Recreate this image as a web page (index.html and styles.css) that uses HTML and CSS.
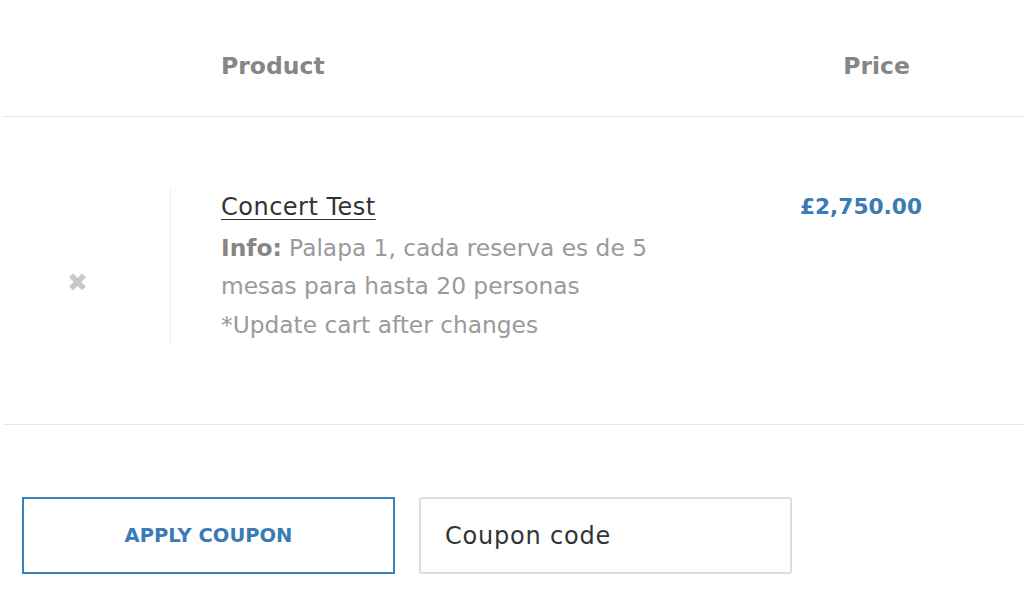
FILE: index.html
```html
<!DOCTYPE html>
<html lang="en">
<head>
<meta charset="utf-8">
<title>Cart</title>
<link rel="stylesheet" href="styles.css">
</head>
<body>
<div class="cart">
  <div class="head-row">
    <div class="col-remove"></div>
    <div class="col-product head">Product</div>
    <div class="col-price head">Price</div>
  </div>
  <div class="item-row">
    <div class="col-remove"><span class="remove">&#x2716;</span></div>
    <div class="col-product item">
      <a class="name" href="#">Concert Test</a>
      <p class="info"><strong>Info:</strong> Palapa 1, cada reserva es de 5 mesas para hasta 20 personas<br>*Update cart after changes</p>
    </div>
    <div class="col-price amount">£2,750.00</div>
  </div>
  <div class="coupon">
    <button class="apply">APPLY COUPON</button>
    <input class="code" type="text" placeholder="Coupon code">
  </div>
</div>
</body>
</html>
```
FILE: styles.css
```css
html, body { margin: 0; padding: 0; background: #fff; }
body { font-family: "DejaVu Sans", sans-serif; }
* { box-sizing: border-box; }
.cart { padding-left: 3px; }
.head-row { display: flex; height: 117px; padding-top: 16px; border-bottom: 1px solid #e6e6e6; align-items: center; }
.col-remove { width: 167px; flex: none; display: flex; justify-content: center; align-items: center; }
.col-product { flex: none; width: 580px; }
.head { font-weight: bold; color: #868686; font-size: 23.5px; }
.head-row .col-product { padding-left: 51px; }
.head-row .col-price { text-align: right; width: 160px; }
.item-row { display: flex; height: 308px; border-bottom: 1px solid #e6e6e6; align-items: center; }
.item-row .col-remove { align-self: stretch; padding-top: 24px; }
.remove { color: #c8c8c8; font-size: 25px; position: relative; left: -9px; }
.item { border-left: 1px solid #eee; padding-left: 50px; padding-top: 5px; height: 156px; margin-top: -10px; }
.name { color: #333; font-size: 24px; letter-spacing: 0.5px; text-decoration: underline; text-underline-offset: 4px; text-decoration-thickness: 1px; display: block; line-height: 28px; }
.info { margin: 8px 0 0; color: #9a9a9a; font-size: 23.3px; line-height: 38.5px; width: 450px; }
.info strong { color: #868686; }
.amount { align-self: flex-start; margin-top: 77px; color: #3a7bb6; font-weight: bold; font-size: 21.7px; width: 172px; text-align: right; }
.coupon { display: flex; gap: 24px; padding: 72px 0 0 19px; }
.apply { width: 373px; height: 77px; border: 2px solid #3a7fbf; background: #fff; color: #3a7bb6; font-family: inherit; font-weight: bold; font-size: 19.5px; }
.code { width: 373px; height: 77px; border: 2px solid #ddd; border-radius: 3px; padding: 0 24px; font-family: inherit; font-size: 24px; letter-spacing: 0.8px; color: #333; }
.code::placeholder { color: #333; }
```
